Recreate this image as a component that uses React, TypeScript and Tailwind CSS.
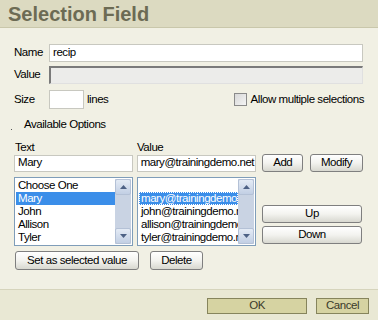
import React from "react";

const t = "text-[11.5px] tracking-[-0.45px]";

const btn =
  "h-[18px] flex items-center justify-center rounded-[3px] border border-[#7f7f7f] bg-gradient-to-b from-[#ffffff] via-[#f3f3ef] to-[#d8d8d0] text-black leading-none " + t;

function ScrollBar() {
  return (
    <div className="w-[16px] h-full flex flex-col bg-[#c9d3e3]">
      <div className="h-[16px] w-[16px] flex items-center justify-center border border-[#b4c1d6] rounded-[2px] bg-gradient-to-b from-[#e4ebf5] to-[#c2cfe4]">
        <svg width="7" height="4" viewBox="0 0 7 4">
          <path d="M0 4 L3.5 0 L7 4 Z" fill="#4d6185" />
        </svg>
      </div>
      <div className="flex-1" />
      <div className="h-[16px] w-[16px] flex items-center justify-center border border-[#b4c1d6] rounded-[2px] bg-gradient-to-b from-[#e4ebf5] to-[#c2cfe4]">
        <svg width="7" height="4" viewBox="0 0 7 4">
          <path d="M0 0 L3.5 4 L7 0 Z" fill="#4d6185" />
        </svg>
      </div>
    </div>
  );
}

function ListBox({ items, selected, focusSel }: { items: string[]; selected: number; focusSel?: boolean }) {
  return (
    <div className="w-[119px] h-[69px] border border-[#7f9db9] bg-white flex p-px">
      <div className="flex-1 overflow-hidden flex flex-col">
        {items.map((it, i) => (
          <div
            key={i}
            className={
              "h-[13px] leading-[13px] whitespace-nowrap overflow-hidden pl-[2px] " +
              t +
              " " +
              (i === selected
                ? "bg-[#3b8ee9] text-white" + (focusSel ? " outline outline-1 outline-dotted outline-[#ffffff] -outline-offset-1" : "")
                : "text-black")
            }
          >
            {it || "\u00a0"}
          </div>
        ))}
      </div>
      <ScrollBar />
    </div>
  );
}

export default function App() {
  return (
    <div
      className="w-[378px] h-[320px] flex flex-col bg-[#f1f0e4] overflow-hidden"
      style={{ fontFamily: '"Liberation Sans", Arial, sans-serif' }}
    >
      <div className="h-[28px] bg-[#dcdac1] border-b border-[#c9c7ab] flex items-center pl-[8px]">
        <span className="text-[20px] font-bold text-[#6c6b54] leading-none">Selection Field</span>
      </div>

      <div className="flex-1 flex flex-col pl-[14px] pr-[15px]">
        <div className="mt-[16px] flex items-center h-[18px]">
          <span className={"w-[35px] text-black " + t}>Name</span>
          <div className={"flex-1 h-[18px] border border-[#c8c8c0] bg-white flex items-center pl-[3px] " + t}>recip</div>
        </div>
        <div className="mt-[4px] flex items-center h-[18px]">
          <span className={"w-[35px] text-black " + t}>Value</span>
          <div className="flex-1 h-[18px] border-t-2 border-l-2 border-t-[#7a7a7a] border-l-[#7a7a7a] border-r border-b border-r-[#e0e0e0] border-b-[#e0e0e0] bg-[#ececea]" />
        </div>
        <div className="mt-[6px] flex items-center h-[19px]">
          <span className={"w-[35px] text-black " + t}>Size</span>
          <div className="w-[35px] h-[19px] border border-[#c8c8c0] bg-white" />
          <span className={"ml-[3px] text-black " + t}>lines</span>
          <div className="ml-auto flex items-center mr-[-1px]">
            <div className="w-[13px] h-[13px] border border-[#8a8a8a] bg-gradient-to-br from-[#d8d8d8] to-[#f4f4f4] mr-[4px]" />
            <span className={"text-black " + t}>Allow multiple selections</span>
          </div>
        </div>

        <div className="mt-[9px] h-[14px] flex items-center relative">
          <span className="absolute left-[-3px] top-[11px] w-[1px] h-[1px] bg-[#555]" />
          <span className={"ml-[10px] text-black " + t}>Available Options</span>
        </div>

        <div className={"mt-[9px] flex h-[13px] leading-[13px] " + t}>
          <span className="w-[123px] pl-px">Text</span>
          <span>Value</span>
        </div>

        <div className="flex items-center">
          <div className={"w-[119px] h-[17px] border border-[#c8c8c0] bg-white flex items-center pl-[3px] " + t}>Mary</div>
          <div className={"ml-[4px] w-[120px] h-[17px] border border-[#c8c8c0] bg-white flex items-center pl-[3px] whitespace-nowrap overflow-hidden " + t}>
            mary@trainingdemo.net
          </div>
          <div className={btn + " ml-[6px] w-[41px]"}>Add</div>
          <div className={btn + " ml-[7px] w-[53px]"}>Modify</div>
        </div>

        <div className="mt-[5px] flex">
          <ListBox items={["Choose One", "Mary", "John", "Allison", "Tyler"]} selected={1} />
          <div className="ml-[4px]">
            <ListBox
              items={["", "mary@trainingdemo.net", "john@trainingdemo.net", "allison@trainingdemo.net", "tyler@trainingdemo.net"]}
              selected={1}
              focusSel
            />
          </div>
          <div className="ml-[6px] flex flex-col pt-[28px]">
            <div className={btn + " w-[100px]"}>Up</div>
            <div className={btn + " w-[100px] mt-[3px]"}>Down</div>
          </div>
        </div>

        <div className="mt-[5px] flex">
          <div className={btn + " ml-px w-[124px] h-[19px]"}>Set as selected value</div>
          <div className={btn + " ml-[11px] w-[53px] h-[19px]"}>Delete</div>
        </div>
      </div>

      <div className="h-[31px] border-t border-[#d6d4bc] bg-[#e9e8d4] flex items-start justify-end pt-[8px] pr-[9px]">
        <div className={"w-[100px] h-[16px] border border-[#86845c] bg-[#d6d3a2] flex items-center justify-center text-[#3a3a2a] " + t}>OK</div>
        <div className={"ml-[9px] w-[53px] h-[16px] border border-[#86845c] bg-[#d6d3a2] flex items-center justify-center text-[#3a3a2a] " + t}>Cancel</div>
      </div>
    </div>
  );
}
